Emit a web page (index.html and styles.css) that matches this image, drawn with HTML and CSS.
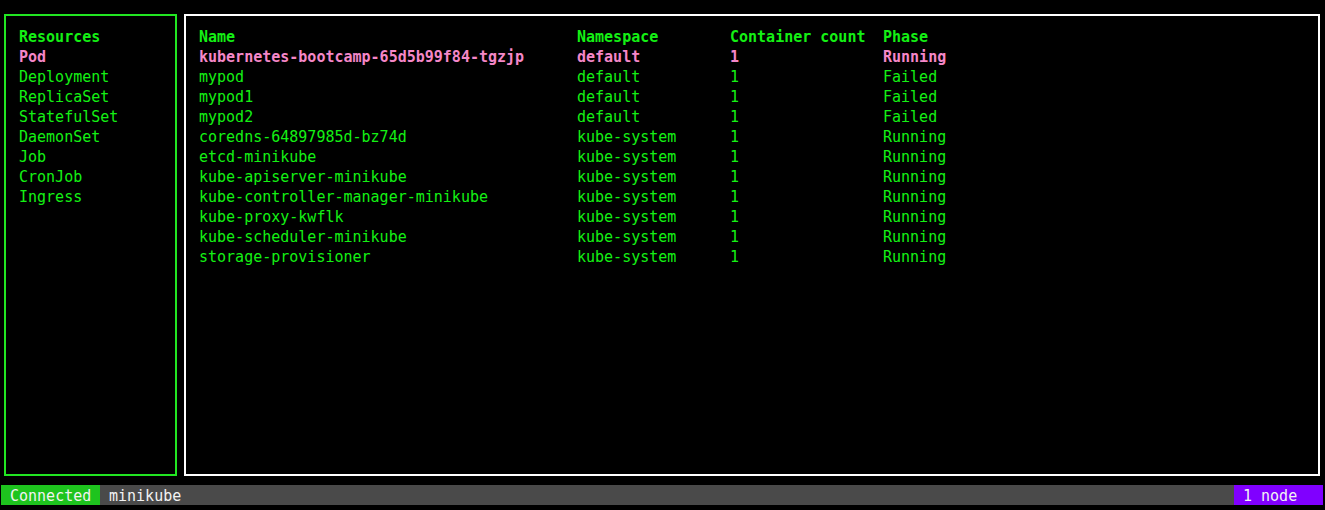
FILE: index.html
```html
<!DOCTYPE html>
<html>
<head>
<meta charset="utf-8">
<link rel="stylesheet" href="styles.css">
</head>
<body>
<div class="screen">
  <div class="panels">
    <div class="sidebar">
      <div class="line head">Resources</div>
      <div class="line sel">Pod</div>
      <div class="line">Deployment</div>
      <div class="line">ReplicaSet</div>
      <div class="line">StatefulSet</div>
      <div class="line">DaemonSet</div>
      <div class="line">Job</div>
      <div class="line">CronJob</div>
      <div class="line">Ingress</div>
    </div>
    <div class="main">
      <div class="row head"><span>Name</span><span>Namespace</span><span>Container count</span><span>Phase</span></div>
      <div class="row sel"><span>kubernetes-bootcamp-65d5b99f84-tgzjp</span><span>default</span><span>1</span><span>Running</span></div>
      <div class="row"><span>mypod</span><span>default</span><span>1</span><span>Failed</span></div>
      <div class="row"><span>mypod1</span><span>default</span><span>1</span><span>Failed</span></div>
      <div class="row"><span>mypod2</span><span>default</span><span>1</span><span>Failed</span></div>
      <div class="row"><span>coredns-64897985d-bz74d</span><span>kube-system</span><span>1</span><span>Running</span></div>
      <div class="row"><span>etcd-minikube</span><span>kube-system</span><span>1</span><span>Running</span></div>
      <div class="row"><span>kube-apiserver-minikube</span><span>kube-system</span><span>1</span><span>Running</span></div>
      <div class="row"><span>kube-controller-manager-minikube</span><span>kube-system</span><span>1</span><span>Running</span></div>
      <div class="row"><span>kube-proxy-kwflk</span><span>kube-system</span><span>1</span><span>Running</span></div>
      <div class="row"><span>kube-scheduler-minikube</span><span>kube-system</span><span>1</span><span>Running</span></div>
      <div class="row"><span>storage-provisioner</span><span>kube-system</span><span>1</span><span>Running</span></div>
    </div>
  </div>
  <div class="status">
    <span class="conn">Connected</span>
    <span class="ctx">minikube</span>
    <span class="nodes">1 node</span>
  </div>
</div>
</body>
</html>
```
FILE: styles.css
```css
html, body {
  margin: 0;
  padding: 0;
  background: #000;
}
body {
  font-family: "DejaVu Sans Mono", monospace;
  font-size: 15px;
  line-height: 20px;
  color: #14f014;
  width: 1325px;
  height: 510px;
  overflow: hidden;
}
.screen {
  padding: 14px 0 0 1px;
}
.panels {
  display: flex;
  padding-left: 3px;
  gap: 7px;
}
.sidebar {
  box-sizing: border-box;
  width: 173px;
  height: 462px;
  border: 2px solid #22e622;
  padding: 11px 0 0 13px;
}
.main {
  box-sizing: border-box;
  width: 1136px;
  height: 462px;
  border: 2px solid #ffffff;
  padding: 11px 0 0 13px;
}
.line {
  height: 20px;
  white-space: pre;
}
.head {
  font-weight: bold;
}
.sel {
  font-weight: bold;
  color: #f587c8;
}
.row {
  display: grid;
  grid-template-columns: 378px 153px 153px 153px;
  height: 20px;
  white-space: pre;
}
.status {
  display: flex;
  margin-top: 9px;
  width: 1322px;
  height: 20px;
  background: #4a4a4a;
  color: #f2f2f2;
}
.status span {
  box-sizing: border-box;
  height: 20px;
  padding-top: 2px;
  line-height: 18px;
}
.conn {
  width: 99px;
  padding-left: 9px;
  background: #1ec41e;
}
.ctx {
  flex: 1;
  padding-left: 9px;
}
.nodes {
  width: 89px;
  padding-left: 9px;
  background: #8000ff;
}
```
